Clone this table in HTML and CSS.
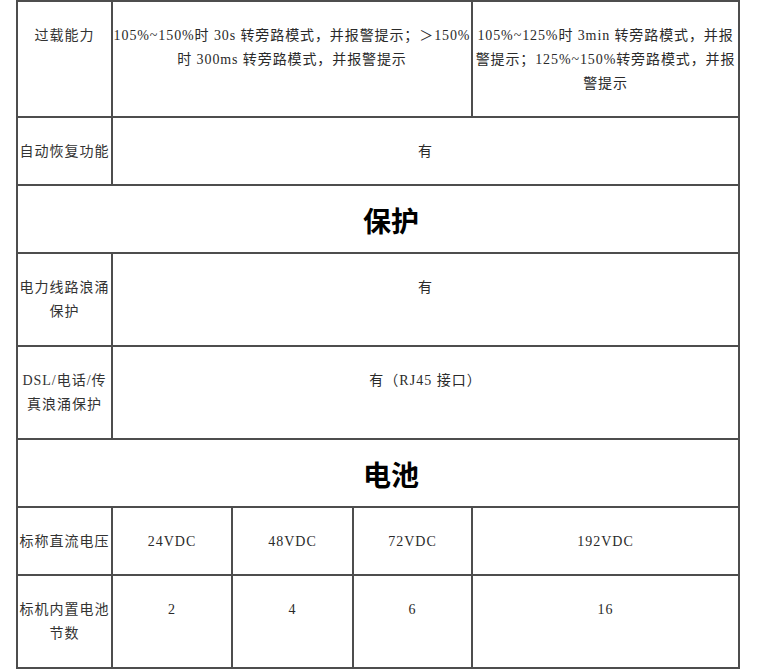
FILE: index.html
```html
<!DOCTYPE html>
<html lang="zh-CN">
<head>
<meta charset="utf-8">
<title>UPS 参数</title>
<link rel="stylesheet" href="styles.css">
</head>
<body>
<div class="page">
<table class="spec">
  <colgroup>
    <col class="c1"><col class="c2"><col class="c3"><col class="c4"><col class="c5">
  </colgroup>
  <tbody>
    <tr>
      <td class="label">过载能力</td>
      <td colspan="3" class="tight">105%~150%时 30s 转旁路模式，并报警提示；＞150%<br>时 300ms 转旁路模式，并报警提示</td>
      <td class="tight">105%~125%时 3min 转旁路模式，并报<br>警提示；125%~150%转旁路模式，并报<br>警提示</td>
    </tr>
    <tr>
      <td class="label">自动恢复功能</td>
      <td colspan="4">有</td>
    </tr>
    <tr>
      <td class="heading" colspan="5">保护</td>
    </tr>
    <tr class="two">
      <td class="label">电力线路浪涌保护</td>
      <td colspan="4">有</td>
    </tr>
    <tr class="two">
      <td class="label">DSL/电话/传真浪涌保护</td>
      <td colspan="4">有（RJ45 接口）</td>
    </tr>
    <tr>
      <td class="heading" colspan="5">电池</td>
    </tr>
    <tr>
      <td class="label">标称直流电压</td>
      <td>24VDC</td>
      <td>48VDC</td>
      <td>72VDC</td>
      <td>192VDC</td>
    </tr>
    <tr class="two">
      <td class="label">标机内置电池节数</td>
      <td>2</td>
      <td>4</td>
      <td>6</td>
      <td>16</td>
    </tr>
  </tbody>
</table>
</div>
</body>
</html>
```
FILE: styles.css
```css
html, body {
  margin: 0;
  padding: 0;
  background: #ffffff;
}

.page {
  padding: 0 0 0 16px;
}

.spec {
  width: 722px;
  border-collapse: collapse;
  table-layout: fixed;
  font-family: "Liberation Serif", "Noto Sans CJK SC", serif;
  font-size: 14px;
  letter-spacing: 1px;
  line-height: 24px;
  color: #2a2a2a;
}

.c1 { width: 95px; }
.c2 { width: 120px; }
.c3 { width: 121px; }
.c4 { width: 119px; }
.c5 { width: 267px; }

.spec td {
  border: 2px solid #4d4d4d;
  padding: 22px 0 20px;
  text-align: center;
  vertical-align: top;
}

.spec .two td {
  padding-bottom: 21px;
}

.spec td.tight {
  letter-spacing: 0.9px;
  white-space: nowrap;
}

.spec td.label {
  color: #333333;
}

.spec td.heading {
  padding-left: 26px;
  font-family: "Noto Sans CJK SC", sans-serif;
  font-size: 28px;
  font-weight: 700;
  letter-spacing: 0;
  color: #000000;
  vertical-align: middle;
}
```
